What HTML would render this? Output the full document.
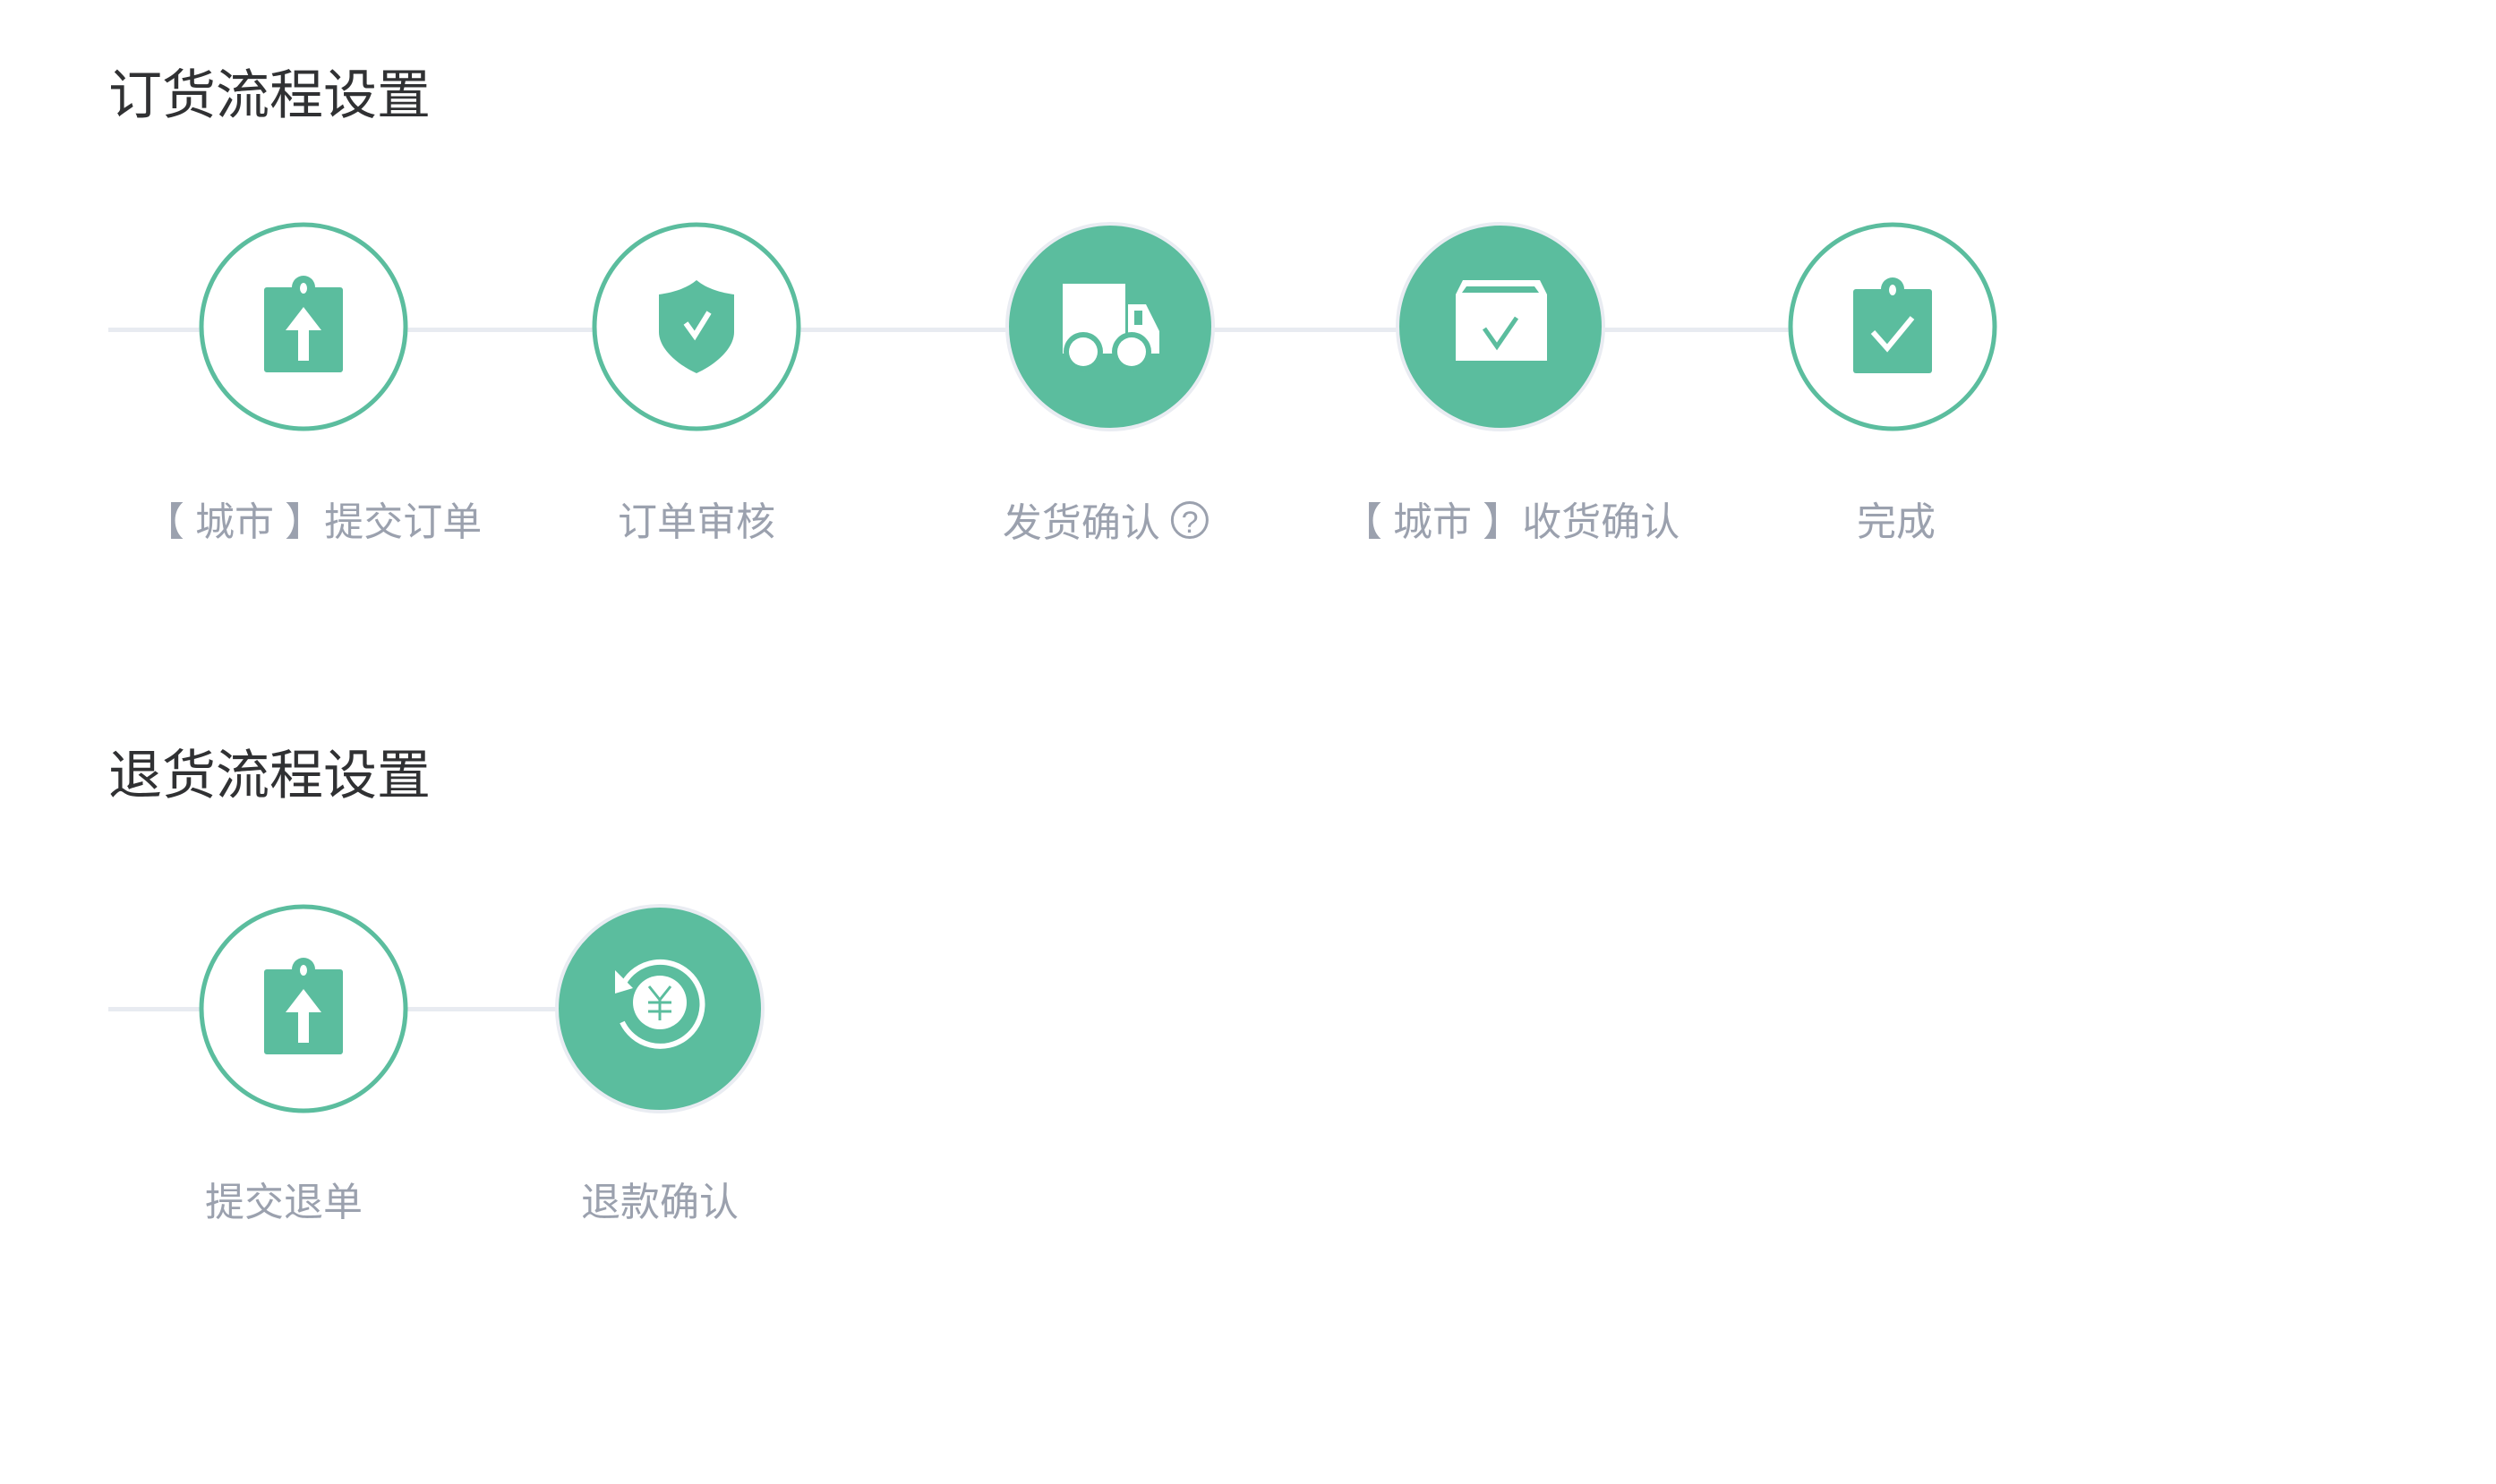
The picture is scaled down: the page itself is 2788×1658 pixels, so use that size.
<!DOCTYPE html>
<html><head><meta charset="utf-8"><style>
html,body{margin:0;padding:0;background:#fff;}
body{width:2788px;height:1658px;position:relative;overflow:hidden;font-family:"Liberation Sans","Noto Sans CJK SC",sans-serif;}
.t{position:absolute;left:121px;font-size:60px;color:#303133;line-height:1;white-space:nowrap;}
.line{position:absolute;height:5px;background:#e8ebf1;}
.c{position:absolute;width:234px;height:234px;}
.lb{position:absolute;font-size:44px;color:#9ba1ae;line-height:1;white-space:nowrap;transform:translateX(-50%);}
</style></head><body>
<div class="t" style="top:77px">订货流程设置</div>
<div class="line" style="left:121px;width:2000px;top:366px"></div>

<svg class="c" style="left:222px;top:248px" viewBox="0 0 234 234">
<circle cx="117" cy="117" r="114" fill="#fff" stroke="#5bbd9e" stroke-width="5"/>
<g transform="translate(117,117)">
<rect x="-44" y="-44" width="88" height="95" rx="3" fill="#5bbd9e"/>
<circle cx="0" cy="-44" r="13" fill="#5bbd9e"/><ellipse cx="0" cy="-43" rx="4" ry="6" fill="#fff"/>
<path d="M0,-22 L-20,4 L-6,4 L-6,38 L6,38 L6,4 L20,4 Z" fill="#fff"/>
</g></svg>

<svg class="c" style="left:661px;top:248px" viewBox="0 0 234 234">
<circle cx="117" cy="117" r="114" fill="#fff" stroke="#5bbd9e" stroke-width="5"/>
<g transform="translate(117,117)">
<path d="M0,-52 C-12,-42 -28,-38 -42,-36 L-42,6 C-42,24 -22,42 0,52 C22,42 42,24 42,6 L42,-36 C28,-38 12,-42 0,-52 Z" fill="#5bbd9e"/>
<path d="M-12,-4 L-2,10 L14,-16" fill="none" stroke="#fff" stroke-width="6"/>
</g></svg>

<svg class="c" style="left:1123px;top:248px" viewBox="0 0 234 234">
<circle cx="117" cy="117" r="115" fill="#5bbd9e" stroke="#e9ecf2" stroke-width="4"/>
<g transform="translate(117,117)">
<rect x="-53" y="-48" width="70" height="78" fill="#fff"/>
<path d="M20,-25 L40,-25 L55,5 L55,30 L20,30 Z" fill="#fff"/>
<rect x="27" y="-18" width="9" height="16" fill="#5bbd9e"/>
<circle cx="-30" cy="28" r="22" fill="#5bbd9e"/><circle cx="-30" cy="28" r="16" fill="#fff"/>
<circle cx="24" cy="28" r="22" fill="#5bbd9e"/><circle cx="24" cy="28" r="16" fill="#fff"/>
</g></svg>

<svg class="c" style="left:1559px;top:248px" viewBox="0 0 234 234">
<circle cx="117" cy="117" r="115" fill="#5bbd9e" stroke="#e9ecf2" stroke-width="4"/>
<g transform="translate(117,117)">
<path d="M-42,-52 L44,-52 L52,-36 L52,38 L-50,38 L-50,-36 Z" fill="#fff"/>
<path d="M-43,-38 L-38,-45 L38,-45 L43,-38 Z" fill="#5bbd9e"/>
<path d="M-18,2 L-4,22 L18,-10" fill="none" stroke="#5bbd9e" stroke-width="5"/>
</g></svg>

<svg class="c" style="left:1997px;top:248px" viewBox="0 0 234 234">
<circle cx="117" cy="117" r="114" fill="#fff" stroke="#5bbd9e" stroke-width="5"/>
<g transform="translate(117,117)">
<rect x="-44" y="-42" width="88" height="94" rx="3" fill="#5bbd9e"/>
<circle cx="0" cy="-42" r="13" fill="#5bbd9e"/><ellipse cx="0" cy="-41" rx="4" ry="6" fill="#fff"/>
<path d="M-22,6 L-6,24 L22,-10" fill="none" stroke="#fff" stroke-width="6"/>
</g></svg>

<div class="lb" style="left:350px;top:562px">【 城市 】提交订单</div>
<div class="lb" style="left:778px;top:562px">订单审核</div>
<div class="lb" style="left:1235px;top:560px">发货确认 <span style="display:inline-block;width:42px;height:42px;border:3px solid #9ba1ae;border-radius:50%;font-size:34px;line-height:42px;text-align:center;box-sizing:border-box;vertical-align:4px">?</span></div>
<div class="lb" style="left:1688px;top:562px">【 城市 】收货确认</div>
<div class="lb" style="left:2118px;top:562px">完成</div>

<div class="t" style="top:837px">退货流程设置</div>
<div class="line" style="left:121px;width:520px;top:1125px"></div>

<svg class="c" style="left:222px;top:1010px" viewBox="0 0 234 234">
<circle cx="117" cy="117" r="114" fill="#fff" stroke="#5bbd9e" stroke-width="5"/>
<g transform="translate(117,117)">
<rect x="-44" y="-44" width="88" height="95" rx="3" fill="#5bbd9e"/>
<circle cx="0" cy="-44" r="13" fill="#5bbd9e"/><ellipse cx="0" cy="-43" rx="4" ry="6" fill="#fff"/>
<path d="M0,-22 L-20,4 L-6,4 L-6,38 L6,38 L6,4 L20,4 Z" fill="#fff"/>
</g></svg>

<svg class="c" style="left:620px;top:1010px" viewBox="0 0 234 234">
<circle cx="117" cy="117" r="115" fill="#5bbd9e" stroke="#e9ecf2" stroke-width="4"/>
<g transform="translate(117,110)">
<path d="M-40,-22 A47,47 0 1 1 -42,22" fill="none" stroke="#fff" stroke-width="6"/>
<path d="M-50,-36 L-30,-16 L-50,-10 Z" fill="#fff"/>
<circle cx="0" cy="0" r="30" fill="#fff"/>
<path d="M-12,-18 L0,-3 L12,-18 M0,-3 L0,20 M-13,0 L13,0 M-13,10 L13,10" fill="none" stroke="#5bbd9e" stroke-width="3"/>
</g></svg>

<div class="lb" style="left:317px;top:1322px">提交退单</div>
<div class="lb" style="left:737px;top:1322px">退款确认</div>
</body></html>
